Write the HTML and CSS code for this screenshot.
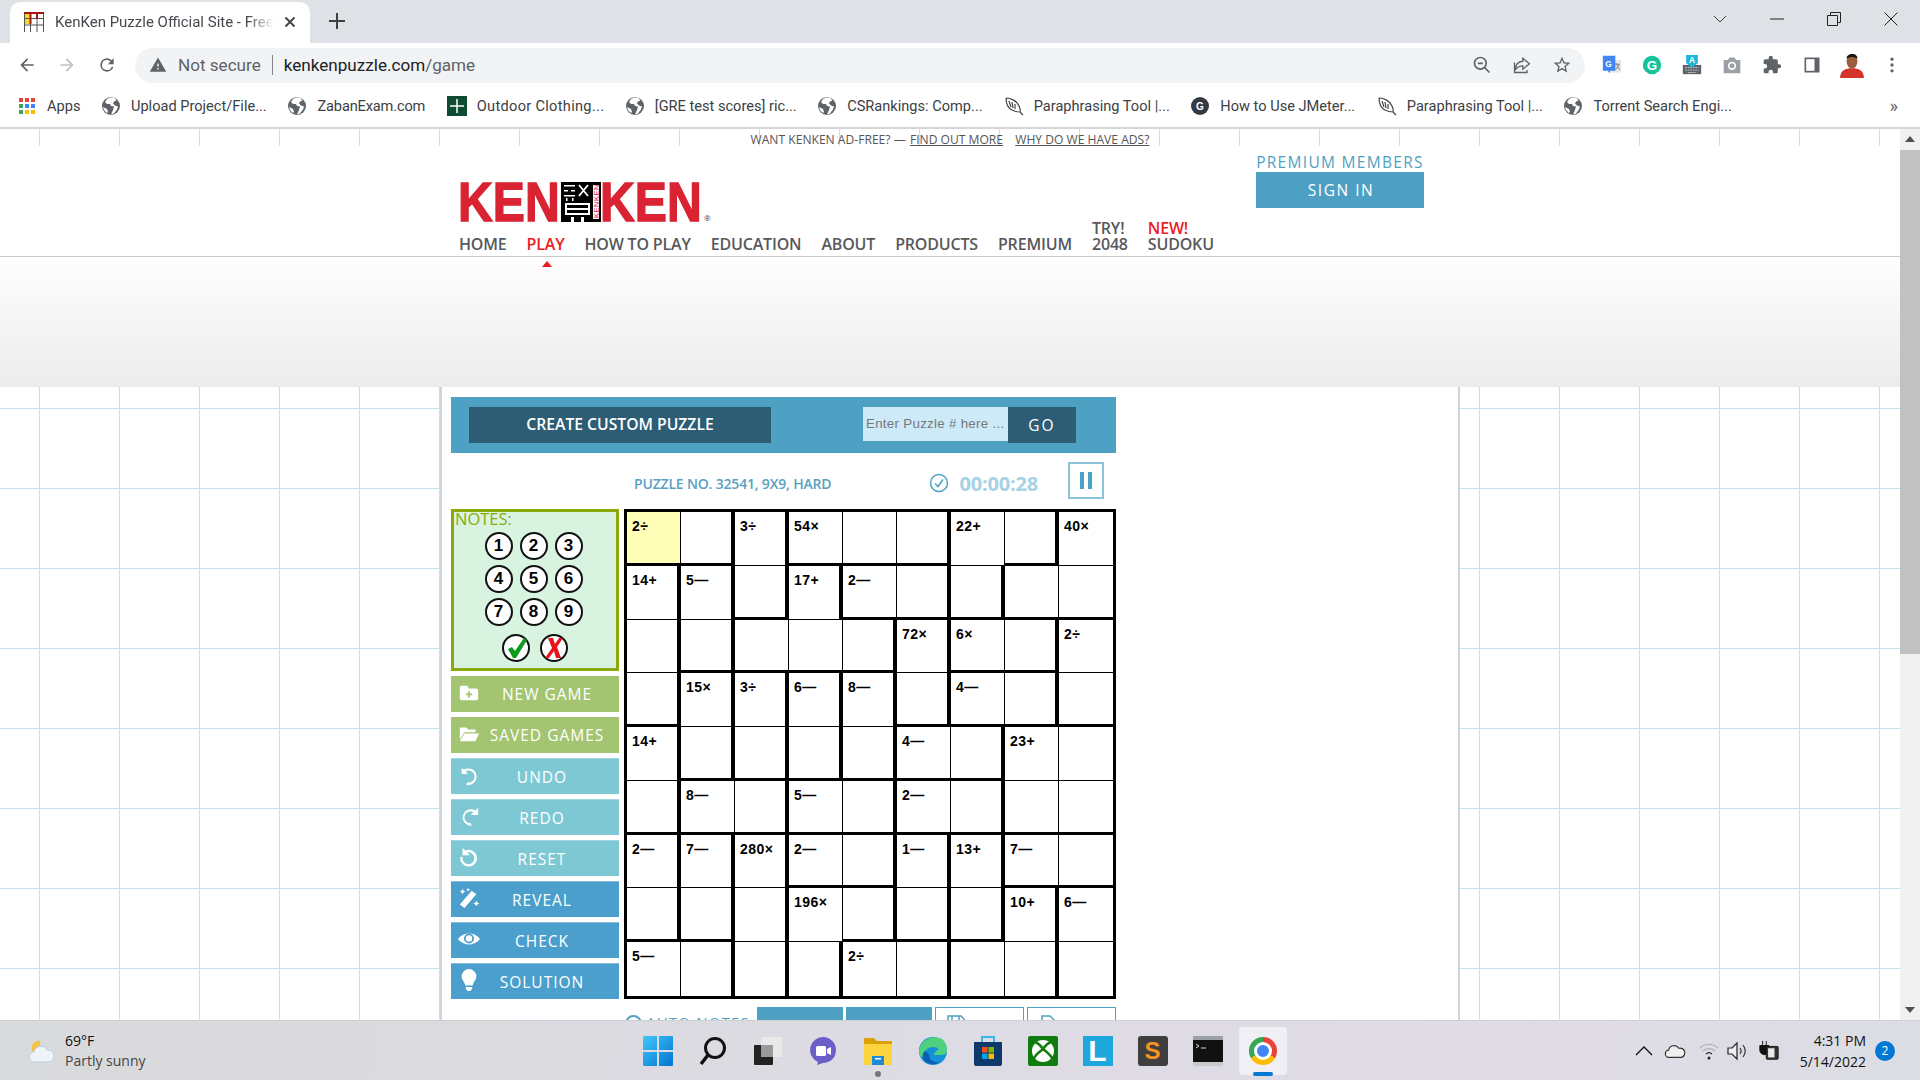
FILE: index.html
```html
<!DOCTYPE html>
<html lang="en">
<head>
    <meta charset="UTF-8">
    <title>KenKen Puzzle Official Site</title>
    <link rel="stylesheet" href="styles.css">
</head>
<body>
    <!-- shared icons -->
    <svg class="defs" width="0" height="0">
        <symbol id="globe" viewBox="0 0 20 20">
            <circle cx="10" cy="10" r="9" fill="#5f6368"/>
            <path d="M9 1.500 6 3 4 6l2 2h3l1 2 3 .5L12 14l-2 4.500 3-1 3-4 1-3-3-1-2-2 1-2 2.500-1L13 1.500zM2 11l4 2 1 3-1 1-3-3z" fill="#fff"/>
        </symbol>
        <symbol id="feather" viewBox="0 0 20 20">
            <path d="M2 2c5 0 11 3 13 8s1 6 1 6l3 3M2 2c0 5 2 10 6 12s8 2 8 2M5 5l2 6M8 6l1 6M11 8l0 5" fill="none" stroke="#444" stroke-width="1.200"/>
        </symbol>
    </svg>

    <div class="tabstrip">
        <div class="tab">
            <svg class="favicon" viewBox="0 0 20 20" width="20" height="20">
                <rect width="20" height="20" fill="#fff"/>
                <rect x="0" y="0" width="6" height="12" fill="#f2dc2b"/>
                <path d="M.5 0v20M6.500 0v20M13 0v20M19.500 0v20M0 6.500h20M0 13h20" stroke="#555" fill="none"/>
                <path d="M0 1h20M6.500 0v12M13 0v7" stroke="#a11" stroke-width="2" fill="none"/>
            </svg>
            <span class="tab-title">KenKen Puzzle Official Site - Free Online</span>
            <svg viewBox="0 0 12 12" width="12" height="12"><path d="M1.500 1.500l9 9M10.500 1.500l-9 9" stroke="#3c4043" stroke-width="1.800"/></svg>
        </div>
        <svg class="new-tab" viewBox="0 0 16 16" width="16" height="16"><path d="M8 0v16M0 8h16" stroke="#3c4043" stroke-width="2"/></svg>
        <div class="window-btns">
            <svg viewBox="0 0 14 8" width="14" height="8"><path d="M1 1l6 6 6-6" fill="none" stroke="#444"/></svg>
            <svg viewBox="0 0 14 14" width="14" height="14"><path d="M0 7h14" stroke="#222"/></svg>
            <svg viewBox="0 0 14 14" width="14" height="14"><path d="M.5 3.500h10v10H.5zM3.500 3.500v-3h10v10h-3" fill="none" stroke="#222"/></svg>
            <svg viewBox="0 0 14 14" width="14" height="14"><path d="M.5.500l13 13M13.500.500l-13 13" stroke="#222"/></svg>
        </div>
    </div>

    <div class="toolbar">
        <svg class="tool" viewBox="0 0 24 24"><path d="M20 11H7.800l5.600-5.600L12 4l-8 8 8 8 1.400-1.400L7.800 13H20z" fill="#5f6368"/></svg>
        <svg class="tool" viewBox="0 0 24 24"><path d="M4 11h12.200l-5.600-5.600L12 4l8 8-8 8-1.400-1.400 5.600-5.600H4z" fill="#bdc1c6"/></svg>
        <svg class="tool" viewBox="0 0 24 24"><path d="M17.650 6.350A7.960 7.960 0 0 0 12 4a8 8 0 1 0 7.730 10h-2.080A6 6 0 1 1 12 6c1.660 0 3.140.690 4.220 1.780L13 11h7V4z" fill="#5f6368"/></svg>
        <div class="omnibox">
            <svg class="warn" viewBox="0 0 24 24"><path d="M1 21h22L12 2 1 21zm12-3h-2v-2h2v2zm0-4h-2v-4h2v4z" fill="#5f6368"/></svg>
            <span class="not-secure">Not secure</span>
            <span class="omni-sep"></span>
            <span class="url">kenkenpuzzle.com<span class="url-path">/game</span></span>
            <span class="omni-icons">
                <svg class="tool" viewBox="0 0 24 24"><circle cx="10" cy="10" r="7" fill="none" stroke="#5f6368" stroke-width="2"/><path d="M15 15l6 6M7 10h6" stroke="#5f6368" stroke-width="2"/></svg>
                <svg class="tool" viewBox="0 0 24 24"><path d="M13 4l8 6.500-8 6.500v-4c-4 0-7 1-9 5 0-6 3-10 9-10.500zM3 9v12h15v-3" fill="none" stroke="#5f6368" stroke-width="1.600"/></svg>
                <svg class="tool" viewBox="0 0 24 24"><path d="M22 9.240l-7.190-.620L12 2 9.190 8.630 2 9.240l5.460 4.730L5.820 21 12 17.270 18.180 21l-1.630-7.030L22 9.240zM12 15.400l-3.760 2.270 1-4.280-3.320-2.880 4.380-.380L12 6.100l1.710 4.040 4.380.380-3.320 2.880 1 4.280L12 15.400z" fill="#5f6368"/></svg>
            </span>
        </div>
        <div class="extensions">
            <svg class="tool" viewBox="0 0 24 24"><rect x="10" y="6" width="13" height="15" fill="#e4e6e8"/><path d="M14 11h7M17 10l4 8M21 11l-5 7" stroke="#777" fill="none"/><path d="M1 1h15v18h-6l-1 3-2-3H1z" fill="#4285f4"/><text x="4" y="14" class="ext-g">G</text></svg>
            <svg class="tool" viewBox="0 0 24 24"><circle cx="12" cy="12" r="11" fill="#15c39a"/><text x="12" y="17.500" class="ext-gr">G</text></svg>
            <svg class="tool" viewBox="0 0 24 24"><rect x="1" y="12" width="22" height="11" fill="#5f6368"/><path d="M4 15h16M4 18h16M7 21h10" stroke="#ddd" stroke-dasharray="2 1"/><path d="M5 0h14v10l-7 5-7-5z" fill="#1eb6d8"/><text x="12" y="9.500" class="ext-a">A</text></svg>
            <svg class="tool" viewBox="0 0 24 24"><path d="M2 6h5l2-3h6l2 3h5v16H2z" fill="#9aa0a6"/><circle cx="12" cy="13" r="5" fill="#fff"/><circle cx="12" cy="13" r="3" fill="#9aa0a6"/></svg>
            <svg class="tool" viewBox="0 0 24 24"><path d="M20.500 11H19V7a2 2 0 0 0-2-2h-4V3.500a2.500 2.500 0 0 0-5 0V5H4a2 2 0 0 0-2 2v3.800h1.500a2.700 2.700 0 0 1 0 5.400H2V20a2 2 0 0 0 2 2h3.800v-1.500a2.700 2.700 0 0 1 5.400 0V22H17a2 2 0 0 0 2-2v-4h1.500a2.500 2.500 0 0 0 0-5z" fill="#5f6368"/></svg>
            <svg class="tool" viewBox="0 0 24 24"><path d="M3 3h18v18H3z" fill="#5f6368"/><rect x="5" y="5" width="10" height="14" fill="#fff"/></svg>
            <svg class="tool avatar" viewBox="0 0 24 24"><circle cx="12" cy="12" r="12" fill="#fff"/><path d="M1 24c0-7 5-9 11-9s11 2 11 9z" fill="#d5342b"/><ellipse cx="12" cy="8.500" rx="5" ry="7" fill="#9a5f3c"/><path d="M7 6c0-5 10-6 10 0-3-2-7-2-10 0z" fill="#1c1410"/></svg>
            <svg class="tool" viewBox="0 0 24 24"><circle cx="12" cy="5" r="2" fill="#5f6368"/><circle cx="12" cy="12" r="2" fill="#5f6368"/><circle cx="12" cy="19" r="2" fill="#5f6368"/></svg>
        </div>
    </div>

    <div class="bookmarks">
        <a class="bm">
            <svg class="bm-icon" viewBox="0 0 20 20"><g><rect x="2" y="2" width="4" height="4" fill="#ea4335"/><rect x="8" y="2" width="4" height="4" fill="#ea4335"/><rect x="14" y="2" width="4" height="4" fill="#ea4335"/><rect x="2" y="8" width="4" height="4" fill="#34a853"/><rect x="8" y="8" width="4" height="4" fill="#4285f4"/><rect x="14" y="8" width="4" height="4" fill="#4285f4"/><rect x="2" y="14" width="4" height="4" fill="#34a853"/><rect x="8" y="14" width="4" height="4" fill="#fbbc04"/><rect x="14" y="14" width="4" height="4" fill="#fbbc04"/></g></svg>
            Apps
        </a>
        <a class="bm long"><svg class="bm-icon"><use href="#globe"/></svg>Upload Project/File...</a>
        <a class="bm tight"><svg class="bm-icon"><use href="#globe"/></svg>ZabanExam.com</a>
        <a class="bm loose"><svg class="bm-icon" viewBox="0 0 20 20"><rect width="20" height="20" fill="#0f4a33"/><path d="M10 3v14M3 10h14" stroke="#fff" stroke-width="1.500"/></svg>Outdoor Clothing...</a>
        <a class="bm long"><svg class="bm-icon"><use href="#globe"/></svg>[GRE test scores] ric...</a>
        <a class="bm long"><svg class="bm-icon"><use href="#globe"/></svg>CSRankings: Comp...</a>
        <a class="bm long"><svg class="bm-icon"><use href="#feather"/></svg>Paraphrasing Tool |...</a>
        <a class="bm long"><svg class="bm-icon" viewBox="0 0 20 20"><circle cx="10" cy="10" r="9" fill="#333a44"/><text x="10" y="14" class="bm-g">G</text></svg>How to Use JMeter...</a>
        <a class="bm long"><svg class="bm-icon"><use href="#feather"/></svg>Paraphrasing Tool |...</a>
        <a class="bm long"><svg class="bm-icon"><use href="#globe"/></svg>Torrent Search Engi...</a>
        <span class="bm-more">»</span>
    </div>

    <div class="viewport">
        <div class="page">
            <div class="ad-line">
                WANT KENKEN AD-FREE? — <a>FIND OUT MORE</a> <a class="ad-why">WHY DO WE HAVE ADS?</a>
            </div>

            <header class="site-header">
                <div class="header-inner">
                    <div class="brand">
                        <div class="logo">
                            <span class="logo-word"><span>KEN</span></span>
                            <svg class="logo-mark" viewBox="0 0 40 40" width="40" height="40">
                                <rect width="40" height="40" fill="#000"/>
                                <path d="M3 3h11v1.500H3zM3 8h4v1.500H3zM10 8h4v1.500h-4zM3 13h11v1.500H3zM5 16h1.500v3H5zM11 16h1.500v3H11z" fill="#fff"/>
                                <path d="M18 3l9 11M27 3l-9 11" stroke="#fff" stroke-width="1.800"/>
                                <path d="M4 21h25v12H4zM6 23v3h21v-3zM6 28v3h21v-3z" fill="#fff" fill-rule="evenodd"/>
                                <path d="M10 35h3v5h-3zM20 35h3v5h-3z" fill="#fff"/>
                                <rect x="32" y="3" width="6" height="34" fill="#fff"/>
                                <text class="logo-small" transform="translate(37.500 36) rotate(-90)">KENKEN</text>
                            </svg>
                            <span class="logo-word"><span>KEN</span></span>
                            <span class="logo-reg">®</span>
                        </div>
                        <nav class="main-nav">
                            <a>HOME</a>
                            <a class="active">PLAY</a>
                            <a>HOW TO PLAY</a>
                            <a>EDUCATION</a>
                            <a>ABOUT</a>
                            <a>PRODUCTS</a>
                            <a>PREMIUM</a>
                            <a>TRY!<br>2048</a>
                            <a><span class="nav-new">NEW!</span><br>SUDOKU</a>
                        </nav>
                    </div>
                    <div class="premium">
                        <div class="premium-label">PREMIUM MEMBERS</div>
                        <a class="sign-in">SIGN IN</a>
                    </div>
                </div>
            </header>

            <div class="ad-band"></div>

            <main class="sheet">
                <div class="custom-bar">
                    <a class="create-btn">CREATE CUSTOM PUZZLE</a>
                    <div class="go-form">
                        <span class="puzzle-input">Enter Puzzle # here ...</span>
                        <a class="go-btn">GO</a>
                    </div>
                </div>

                <div class="status-row">
                    <span class="puzzle-name">PUZZLE NO. 32541, 9X9, HARD</span>
                    <svg class="timer-icon" viewBox="0 0 20 20" width="20" height="20"><circle cx="10" cy="10" r="8.500" fill="none" stroke="#4fa1c3" stroke-width="1.500"/><path d="M6 10.500l3 3 5-7" fill="none" stroke="#4fa1c3" stroke-width="1.500"/></svg>
                    <span class="timer">00:00:28</span>
                    <a class="pause-btn"><span></span><span></span></a>
                </div>

                <div class="game">
                    <div class="side">
                        <div class="notes">
                            <div class="notes-title">NOTES:</div>
                            <div class="note-grid">
                                <span class="note">1</span><span class="note">2</span><span class="note">3</span>
                                <span class="note">4</span><span class="note">5</span><span class="note">6</span>
                                <span class="note">7</span><span class="note">8</span><span class="note">9</span>
                            </div>
                            <div class="note-actions">
                                <span class="note"><svg viewBox="0 0 24 24" width="24" height="24"><path d="M4 13l4-2 3 4L20 2l3 2-11 18h-3z" fill="#0a9a1e"/></svg></span>
                                <span class="note"><svg viewBox="0 0 24 24" width="24" height="24"><path d="M6 2h5l2 6 4-6h4l-6 9 4 11h-5l-2-7-5 7H3l7-10z" fill="#e8141c"/></svg></span>
                            </div>
                        </div>

                        <a class="side-btn green wide"><svg viewBox="0 0 24 24"><path d="M2 6a2 2 0 0 1 2-2h6l2 3h8a2 2 0 0 1 2 2v9a2 2 0 0 1-2 2H4a2 2 0 0 1-2-2z" fill="#fff"/><path d="M12 10v7M8.500 13.500h7" stroke="#a3c571" stroke-width="2"/></svg><span>NEW GAME</span></a>
                        <a class="side-btn green wide"><svg viewBox="0 0 24 24"><path d="M2 5h7l2 2h8v3H7l-5 8zM7 11.500h16L19 20H2z" fill="#fff"/></svg><span>SAVED GAMES</span></a>
                        <a class="side-btn teal"><svg viewBox="0 0 24 24"><path d="M4 4v7h7L8.200 8.200A6.500 6.500 0 1 1 10 20l-1 2.500A9 9 0 1 0 6.300 6.300z" fill="#fff"/></svg><span>UNDO</span></a>
                        <a class="side-btn teal"><svg viewBox="0 0 24 24"><path d="M22 3v8h-8l3-3a6.500 6.500 0 1 0-3 12l1 2.500A9 9 0 1 1 19 6z" fill="#fff"/></svg><span>REDO</span></a>
                        <a class="side-btn teal"><svg viewBox="0 0 24 24"><path d="M5 2v8h8l-3-3a6.500 6.500 0 1 1-5 5H2.500A9.200 9.200 0 1 0 8 4.800z" fill="#fff"/></svg><span>RESET</span></a>
                        <a class="side-btn blue"><svg viewBox="0 0 24 24"><path d="M15 4l5 4L7 23l-5-4z" fill="#fff"/><path d="M5 2l1 2 2 1-2 1-1 2-1-2-2-1 2-1zM11 1l.7 1.300L13 3l-1.300.7L11 5l-.7-1.300L9 3l1.300-.7zM20 15l1 2 2 1-2 1-1 2-1-2-2-1 2-1z" fill="#fff"/></svg><span>REVEAL</span></a>
                        <a class="side-btn blue"><svg viewBox="0 0 24 24"><path d="M0 12c6-8 18-8 24 0-6 8-18 8-24 0z" fill="#fff"/><circle cx="12" cy="11.500" r="5.500" fill="#4a9fcc"/><circle cx="12" cy="11.500" r="3.500" fill="#fff"/></svg><span>CHECK</span></a>
                        <a class="side-btn blue"><svg viewBox="0 0 24 24"><path d="M12 0a8 8 0 0 1 8 8c0 4-3 6-4 10H8C7 14 4 12 4 8a8 8 0 0 1 8-8zM8.500 19.500h7v2l-2 2.500h-3l-2-2.500z" fill="#fff"/></svg><span>SOLUTION</span></a>
                    </div>

                    <div class="board">
                        <div class="cell b sel"><span>2÷</span></div><div class="cell r b"></div><div class="cell r"><span>3÷</span></div><div class="cell b"><span>54×</span></div><div class="cell b"></div><div class="cell r b"></div><div class="cell"><span>22+</span></div><div class="cell r b"></div><div class="cell"><span>40×</span></div>
                        <div class="cell r"><span>14+</span></div><div class="cell r"><span>5—</span></div><div class="cell r b"></div><div class="cell r"><span>17+</span></div><div class="cell b"><span>2—</span></div><div class="cell r b"></div><div class="cell r b"></div><div class="cell b"></div><div class="cell b"></div>
                        <div class="cell r"></div><div class="cell r b"></div><div class="cell b"></div><div class="cell b"></div><div class="cell r b"></div><div class="cell r"><span>72×</span></div><div class="cell b"><span>6×</span></div><div class="cell r b"></div><div class="cell"><span>2÷</span></div>
                        <div class="cell r b"></div><div class="cell r"><span>15×</span></div><div class="cell r"><span>3÷</span></div><div class="cell r"><span>6—</span></div><div class="cell r"><span>8—</span></div><div class="cell r b"></div><div class="cell b"><span>4—</span></div><div class="cell r b"></div><div class="cell b"></div>
                        <div class="cell r"><span>14+</span></div><div class="cell r b"></div><div class="cell r b"></div><div class="cell r b"></div><div class="cell r b"></div><div class="cell b"><span>4—</span></div><div class="cell r b"></div><div class="cell"><span>23+</span></div><div class="cell"></div>
                        <div class="cell r b"></div><div class="cell b"><span>8—</span></div><div class="cell r b"></div><div class="cell b"><span>5—</span></div><div class="cell r b"></div><div class="cell b"><span>2—</span></div><div class="cell r b"></div><div class="cell b"></div><div class="cell b"></div>
                        <div class="cell r"><span>2—</span></div><div class="cell r"><span>7—</span></div><div class="cell r"><span>280×</span></div><div class="cell b"><span>2—</span></div><div class="cell r b"></div><div class="cell r"><span>1—</span></div><div class="cell r"><span>13+</span></div><div class="cell b"><span>7—</span></div><div class="cell b"></div>
                        <div class="cell r b"></div><div class="cell r b"></div><div class="cell r"></div><div class="cell"><span>196×</span></div><div class="cell r b"></div><div class="cell r b"></div><div class="cell r b"></div><div class="cell r"><span>10+</span></div><div class="cell"><span>6—</span></div>
                        <div class="cell"><span>5—</span></div><div class="cell r"></div><div class="cell r"></div><div class="cell r"></div><div class="cell"><span>2÷</span></div><div class="cell r"></div><div class="cell"></div><div class="cell r"></div><div class="cell"></div>
                    </div>
                </div>

                <div class="board-tools">
                    <span class="auto-notes"><span class="auto-dot"></span>AUTO NOTES</span>
                    <a class="tool-btn solid"></a>
                    <a class="tool-btn solid"></a>
                    <a class="tool-btn"><svg viewBox="0 0 20 20" width="20" height="20"><path d="M2 2h13l3 3v13H2zM6 2v5h7V2" fill="none" stroke="#4fa1c3" stroke-width="1.500"/></svg>SAVE</a>
                    <a class="tool-btn"><svg viewBox="0 0 20 20" width="20" height="20"><path d="M4 2h8l4 4v12H4z" fill="none" stroke="#4fa1c3" stroke-width="1.500"/></svg>LOAD</a>
                </div>
            </main>
        </div>

        <div class="scrollbar">
            <span class="scroll-arrow up"></span>
            <div class="scroll-track"><div class="scroll-thumb"></div></div>
            <span class="scroll-arrow down"></span>
        </div>
    </div>

    <footer class="taskbar">
        <div class="weather">
            <svg viewBox="0 0 28 28" width="28" height="28"><path d="M6 16A7 7 0 0 1 12 4v10z" fill="#f5c242"/><path d="M7 25a5 5 0 0 1-1-10 7 7 0 0 1 13-2 6 6 0 0 1 2 12z" fill="#eef4fa" stroke="#bcd0e2"/></svg>
            <div class="weather-text">
                <div>69°F</div>
                <div class="weather-sub">Partly sunny</div>
            </div>
        </div>

        <div class="task-icons">
            <span class="task"><svg viewBox="0 0 30 30"><defs><linearGradient id="win" x1="0" y1="0" x2="1" y2="1"><stop offset="0" stop-color="#3fc8f8"/><stop offset="1" stop-color="#0473d0"/></linearGradient></defs><path d="M0 1a1 1 0 0 1 1-1h13v14H0zM16 0h13a1 1 0 0 1 1 1v13H16zM0 16h14v14H1a1 1 0 0 1-1-1zM16 16h14v13a1 1 0 0 1-1 1H16z" fill="url(#win)"/></svg></span>
            <span class="task"><svg viewBox="0 0 30 30"><circle cx="17" cy="12" r="9.500" fill="none" stroke="#111" stroke-width="3"/><path d="M10 19l-7 9" stroke="#111" stroke-width="3.500"/></svg></span>
            <span class="task"><svg viewBox="0 0 30 30"><rect x="1" y="9" width="19" height="20" rx="1" fill="#222"/><rect x="8" y="1" width="21" height="20" rx="1" fill="#e9e9ea"/><rect x="8" y="9" width="12" height="12" fill="#9a9a9a"/></svg></span>
            <span class="task"><svg viewBox="0 0 30 30"><path d="M15 1a13 13 0 0 1 13 13c0 8-6 13-13 13l-6 2 1-3A13 13 0 0 1 15 1z" fill="#6a5fc9"/><rect x="8" y="10" width="10" height="10" rx="1.500" fill="#fff"/><path d="M19 13l4-2v8l-4-2z" fill="#fff"/></svg></span>
            <span class="task running"><svg viewBox="0 0 30 30"><path d="M1 3a1 1 0 0 1 1-1h9l3 3h15v5H1z" fill="#dca109"/><path d="M1 8h28v20a1 1 0 0 1-1 1H2a1 1 0 0 1-1-1z" fill="#fbd33f"/><rect x="9" y="20" width="12" height="9" fill="#1e8bd6"/><rect x="12" y="22" width="6" height="1.500" fill="#fff"/></svg></span>
            <span class="task"><svg viewBox="0 0 30 30"><circle cx="15" cy="15" r="14" fill="#1490d8"/><path d="M1 15C2 5 12-1 22 2c5 2 7 7 7 13 0 3-3 4-7 4h-6c0-3 3-5 5-5-2-5-15-4-16 6-1 3-4-1-4-5z" fill="#4ed07e"/><path d="M11 19c0 5 5 8 11 7-4 3-11 3-15-1-3-3-3-8 0-10 1 1 4 2 4 4z" fill="#0a5fb0"/></svg></span>
            <span class="task"><svg viewBox="0 0 30 30"><path d="M9 6V1h12v5" fill="none" stroke="#3cb4e7" stroke-width="2"/><path d="M1 6h28v22a2 2 0 0 1-2 2H3a2 2 0 0 1-2-2z" fill="#0e3a6b"/><rect x="9" y="11" width="5.500" height="5.500" fill="#f25022"/><rect x="15.500" y="11" width="5.500" height="5.500" fill="#7fba00"/><rect x="9" y="17.500" width="5.500" height="5.500" fill="#00a4ef"/><rect x="15.500" y="17.500" width="5.500" height="5.500" fill="#ffb900"/></svg></span>
            <span class="task"><svg viewBox="0 0 30 30"><rect width="30" height="30" rx="2" fill="#107c10"/><circle cx="15" cy="15" r="11" fill="#fff"/><path d="M7 6c3 1 6 4 8 7 2-3 5-6 8-7M5 24c2-5 6-8 10-11 4 3 8 6 10 11" fill="none" stroke="#107c10" stroke-width="2.500"/></svg></span>
            <span class="task task-l">L</span>
            <span class="task task-s">S</span>
            <span class="task"><svg viewBox="0 0 30 30"><rect width="30" height="30" fill="#111"/><rect width="30" height="4" fill="#9aa0a6"/><rect y="26" width="30" height="4" fill="#c9c9c9"/><path d="M3 8l3 2-3 2M8 12h5" stroke="#ddd" fill="none"/></svg></span>
            <span class="task active"><span class="chrome"><span class="chrome-dot"></span></span></span>
        </div>

        <div class="tray">
            <svg viewBox="0 0 18 10" width="18" height="10"><path d="M1 9l8-8 8 8" fill="none" stroke="#111" stroke-width="1.300"/></svg>
            <svg class="tray-cloud" viewBox="0 0 24 18" width="22" height="18"><path d="M6 16a4 4 0 0 1-1-8 6 6 0 0 1 11-2 5 5 0 0 1 3 10z" fill="#efefef" stroke="#333" stroke-width="1.300"/></svg>
            <svg class="tray-wifi" viewBox="0 0 22 22" width="22" height="22"><path d="M2 8a13 13 0 0 1 18 0M5 11a9 9 0 0 1 12 0" fill="none" stroke="#b5b5b5" stroke-width="1.300"/><path d="M8 14a4.500 4.500 0 0 1 6 0" fill="none" stroke="#222" stroke-width="1.300"/><circle cx="11" cy="18" r="1.500" fill="#222"/></svg>
            <svg class="tray-sound" viewBox="0 0 22 22" width="22" height="22"><path d="M2 8h4l5-5v16l-5-5H2z" fill="#efefef" stroke="#222" stroke-width="1.200"/><path d="M14 8c1.500 2 1.500 4 0 6M17 5c3 4 3 8 0 12" fill="none" stroke="#333" stroke-width="1.200"/></svg>
            <svg class="tray-power" viewBox="0 0 24 24" width="22" height="22"><path d="M5 1v5M9 1v5M2 6h10v5a5 5 0 0 1-10 0z" fill="#111" stroke="#111"/><rect x="9" y="7" width="13" height="14" rx="1" fill="#333" stroke="#111"/><rect x="11" y="9" width="7" height="10" fill="#e9e9ea"/></svg>
            <div class="clock">
                <div>4:31 PM</div>
                <div>5/14/2022</div>
            </div>
            <span class="badge">2</span>
        </div>
    </footer>
</body>
</html>
```

FILE: styles.css
```css
html, body {
    height: 100%;
}

body {
    margin: 0;
    height: 100vh;
    display: flex;
    flex-direction: column;
    overflow: hidden;
    font-family: "Open Sans", sans-serif;
    background: #fff;
    color: #333;
}

.defs {
    position: absolute;
}

/* browser chrome */
.tabstrip {
    height: 43px;
    flex: none;
    background: #dee1e6;
    display: flex;
    align-items: flex-end;
    padding-left: 10px;
    box-sizing: border-box;
    font-family: Roboto, sans-serif;
}

.tab {
    width: 300px;
    height: 41px;
    box-sizing: border-box;
    background: #fff;
    border-radius: 10px 10px 0 0;
    display: flex;
    align-items: center;
    padding: 0 14px 2px 14px;
    gap: 10px;
}

.favicon {
    flex: none;
}

.tab-title {
    flex: 1;
    font-size: 15px;
    color: #45494e;
    white-space: nowrap;
    overflow: hidden;
    padding-left: 1px;
    -webkit-mask-image: linear-gradient(90deg, #000 88%, transparent);
    mask-image: linear-gradient(90deg, #000 88%, transparent);
}

.new-tab {
    margin: 0 0 14px 19px;
}

.window-btns {
    margin-left: auto;
    align-self: stretch;
    display: flex;
    align-items: center;
    gap: 43px;
    padding: 0 22px 6px 0;
}

.toolbar {
    height: 44px;
    flex: none;
    display: flex;
    align-items: center;
    padding-left: 17px;
    gap: 20px;
    box-sizing: border-box;
    font-family: Roboto, sans-serif;
}

.tool {
    width: 20px;
    height: 20px;
    flex: none;
}

.omnibox {
    width: 1450px;
    height: 35px;
    margin: 0 0 0 -2px;
    background: #f1f3f4;
    border-radius: 18px;
    display: flex;
    align-items: center;
    padding: 0 0 0 14px;
    box-sizing: border-box;
    font-size: 17.100px;
}

.warn {
    width: 18px;
    height: 18px;
    margin-right: 11px;
}

.not-secure {
    color: #5f6368;
}

.omni-sep {
    width: 1px;
    height: 20px;
    background: #80868b;
    margin: 0 11px;
}

.url {
    color: #202124;
}

.url-path {
    color: #5f6368;
}

.omni-icons {
    margin-left: auto;
    display: flex;
    gap: 20px;
    padding-right: 13px;
}

.extensions {
    display: flex;
    gap: 20px;
    margin-left: -3px;
}

.avatar {
    width: 26px;
    height: 26px;
    margin: -3px -3px;
}

.ext-g, .bm-g {
    font: bold 10px "Liberation Sans", sans-serif;
    fill: #fff;
}

.bm-g {
    text-anchor: middle;
}

.ext-gr {
    font: bold 16px "Liberation Sans", sans-serif;
    fill: #fff;
    text-anchor: middle;
}

.ext-a {
    font: bold 10px "Liberation Sans", sans-serif;
    fill: #fff;
    text-anchor: middle;
}

.bookmarks {
    height: 42px;
    flex: none;
    display: flex;
    align-items: center;
    padding: 0 0 3px 17px;
    gap: 20.500px;
    font-family: Roboto, sans-serif;
    font-size: 14.600px;
    color: #3c4043;
    border-bottom: 2px solid #d6d6d6;
    box-sizing: border-box;
    white-space: nowrap;
}

.bm {
    display: flex;
    align-items: center;
    gap: 10px;
}

/* chrome elides long bookmarks at one width */
.bm.long {
    min-width: 166px;
}

.bm.tight {
    letter-spacing: -.15px;
    margin-right: 1px;
}

.bm.loose {
    letter-spacing: .3px;
}

.bm-icon {
    width: 20px;
    height: 20px;
}

.bm-more {
    margin-left: auto;
    padding-right: 22px;
    font-size: 18px;
    color: #5f6368;
}

/* the page */
.viewport {
    flex: 1;
    min-height: 0;
    display: flex;
}

.page {
    flex: 1;
    min-width: 0;
    overflow: hidden;
    background-color: #fff;
    background-image:
        linear-gradient(#c5e3ec 1px, transparent 1px),
        linear-gradient(90deg, #c5e3ec 1px, transparent 1px);
    background-size: 80px 80px;
    background-position: 39px 39px;
}

.ad-line {
    height: 17px;
    line-height: 21px;
    text-align: center;
    font-size: 12.100px;
    color: #555;
    white-space: nowrap;
}

.ad-line a {
    text-decoration: underline;
    margin-left: 1px;
}

.ad-line .ad-why {
    margin-left: 9px;
}

.site-header {
    height: 111px;
    box-sizing: border-box;
    background: #fff;
    border-bottom: 1px solid #ccc;
}

.header-inner {
    width: 1020px;
    height: 100%;
    margin: 0 auto;
    padding: 0 36px 0 19px;
    box-sizing: border-box;
    display: flex;
    justify-content: space-between;
}

.brand {
    display: flex;
    flex-direction: column;
}

.logo {
    display: flex;
    align-items: flex-end;
    margin-top: 36px;
    height: 40px;
}

.logo-word {
    display: block;
    width: 102px;
    height: 40px;
    overflow: visible;
    line-height: 40px;
    font-family: "Liberation Sans", sans-serif;
    font-weight: bold;
    font-size: 56px;
    color: #d92232;
}

.logo-word span {
    display: block;
    width: 118px;
    margin-left: -1px;
    transform: scaleX(.86);
    transform-origin: left;
    -webkit-text-stroke: 1.400px #d92232;
}

.logo-reg {
    font-size: 8px;
    line-height: 8px;
    color: #444;
    margin-left: 1px;
}

.logo-mark {
    flex: none;
}

.logo-small {
    font: 7.500px "Liberation Sans", sans-serif;
    fill: #d92232;
    letter-spacing: .5px;
}

.main-nav {
    margin-top: -2px;
    display: flex;
    align-items: flex-end;
    gap: 20px;
    font-size: 16px;
    line-height: 16px;
    font-weight: 600;
    letter-spacing: -.18px;
    color: #58595b;
    white-space: nowrap;
}

.main-nav .active {
    color: #ed1c24;
    position: relative;
}

.main-nav .active::after {
    content: "";
    position: absolute;
    left: 15px;
    top: 25px;
    border: 5px solid transparent;
    border-top: 0;
    border-bottom: 6px solid #ed1c24;
}

.nav-new {
    color: #ed1c24;
}

.premium {
    padding-top: 7px;
    width: 168px;
    text-align: center;
}

.premium-label {
    font-size: 15.500px;
    line-height: 19px;
    letter-spacing: 1.300px;
    color: #4fa1c3;
    white-space: nowrap;
}

.sign-in {
    display: block;
    height: 36px;
    line-height: 36px;
    padding-left: 2px;
    background: #4d9fc3;
    color: #fff;
    font-size: 15.500px;
    letter-spacing: 1.500px;
}

.ad-band {
    height: 130px;
    background: linear-gradient(#fefefe, #ececec);
}

.sheet {
    width: 1020px;
    margin: 0 auto;
    box-sizing: border-box;
    background: #fff;
    border-left: 2px solid #d0d4d8;
    border-right: 2px solid #d0d4d8;
    padding: 10px 0 0 9px;
    min-height: 700px;
}

.custom-bar {
    width: 665px;
    height: 56px;
    box-sizing: border-box;
    background: #4fa1c3;
    padding: 10px 40px 0 18px;
    display: flex;
    justify-content: space-between;
}

.create-btn {
    width: 302px;
    height: 36px;
    line-height: 35px;
    text-align: center;
    background: #2c5d75;
    color: #fff;
    font-size: 15.700px;
    font-weight: 600;
}

.go-form {
    display: flex;
    align-items: flex-start;
}

.puzzle-input {
    width: 145px;
    height: 34px;
    line-height: 34px;
    box-sizing: border-box;
    padding-left: 3px;
    background: #cdeaf8;
    color: #777;
    font-family: "Liberation Sans", sans-serif;
    font-size: 13.300px;
    letter-spacing: .3px;
    white-space: nowrap;
}

.go-btn {
    width: 68px;
    height: 36px;
    line-height: 36px;
    text-align: center;
    background: #2c5d75;
    color: #fff;
    font-size: 15.500px;
    letter-spacing: 2px;
}

.status-row {
    width: 665px;
    height: 56px;
    display: flex;
    align-items: center;
}

.puzzle-name {
    margin: 4px 0 0 183px;
    font-size: 14px;
    font-weight: 600;
    letter-spacing: -.18px;
    color: #5a9fc0;
    white-space: nowrap;
}

.timer-icon {
    margin: 4px 0 0 auto;
}

.timer {
    margin: 4px 0 0 11px;
    font-size: 20px;
    font-weight: 700;
    letter-spacing: -.2px;
    color: #a6d2e4;
}

.pause-btn {
    margin: -2px 12px 0 30px;
    width: 36px;
    height: 37px;
    box-sizing: border-box;
    border: 2px solid #8cc3da;
    display: flex;
    align-items: center;
    justify-content: center;
    gap: 4px;
}

.pause-btn span {
    width: 4px;
    height: 17px;
    background: #4ba0c5;
}

.game {
    width: 665px;
    display: flex;
    gap: 5px;
}

.side {
    width: 168px;
    flex: none;
    display: flex;
    flex-direction: column;
    gap: 5px;
}

.notes {
    height: 162px;
    box-sizing: border-box;
    border: 3px solid #8aaa0a;
    background: #d8f4e0;
}

.notes-title {
    height: 20px;
    line-height: 14px;
    font-size: 16.500px;
    color: #8aaa0a;
    padding-left: 1px;
}

.note-grid {
    display: grid;
    grid-template-columns: repeat(3, 28px);
    gap: 5px 7px;
    justify-content: center;
    margin-right: 3px;
}

.note {
    width: 28px;
    height: 28px;
    box-sizing: border-box;
    border: 2px solid #111;
    border-radius: 50%;
    background: #fff;
    display: flex;
    align-items: center;
    justify-content: center;
    font: bold 17px "Liberation Sans", sans-serif;
    color: #000;
}

.note svg {
    flex: none;
}

.note-actions {
    margin-top: 8px;
    display: flex;
    justify-content: center;
    gap: 10px;
}

.side-btn {
    height: 36px;
    box-sizing: border-box;
    display: flex;
    align-items: center;
    padding: 0 17px 0 7px;
    color: #fff;
    font-size: 15.500px;
    letter-spacing: 1px;
    white-space: nowrap;
}

.side-btn svg {
    width: 22px;
    height: 22px;
    flex: none;
    margin-right: 2px;
    margin-top: -3px;
}

.side-btn span {
    flex: 1;
    text-align: center;
}

.side-btn.wide {
    padding-right: 7px;
}

.green {
    background: #a3c571;
}

.teal {
    background: #7ec8d4;
    border-top: 1px solid #9fd6df;
}

.blue {
    background: #4a9fcc;
    border-top: 1px solid #86bfdc;
}

.board {
    width: 492px;
    height: 490px;
    box-sizing: border-box;
    border: 3px solid #000;
    display: grid;
    grid-template-columns: repeat(9, 1fr);
    grid-template-rows: repeat(9, 1fr);
}

.cell {
    box-sizing: border-box;
    border-right: 1px solid #000;
    border-bottom: 1px solid #000;
    padding: 6px 0 0 5px;
    font: bold 14px/16px "Liberation Sans", sans-serif;
    letter-spacing: .5px;
    color: #000;
    white-space: nowrap;
    min-width: 0;
    min-height: 0;
}

.cell.r {
    border-right-width: 4px;
}

.cell.b {
    border-bottom-width: 3px;
}

.cell:nth-child(9n) {
    border-right: 0;
}

.cell:nth-last-child(-n+9) {
    border-bottom: 0;
}

.sel {
    background: #ffffb8;
}

.board-tools {
    width: 665px;
    margin-top: 8px;
    display: flex;
    align-items: flex-start;
    gap: 3px;
    justify-content: flex-end;
}

.auto-notes {
    margin-right: 4px;
    padding-top: 8px;
    display: flex;
    align-items: flex-start;
    gap: 4px;
    font-size: 15px;
    line-height: 15px;
    letter-spacing: 1.200px;
    color: #4fa1c3;
}

.auto-dot {
    width: 17px;
    height: 17px;
    box-sizing: border-box;
    border: 2px solid #4fa1c3;
    border-radius: 50%;
}

.tool-btn {
    width: 89px;
    height: 34px;
    box-sizing: border-box;
    border: 1px solid #4fa1c3;
    display: flex;
    align-items: center;
    gap: 8px;
    padding-left: 10px;
    font-size: 14px;
    color: #4fa1c3;
}

.tool-btn.solid {
    background: #4fa1c3;
    width: 86px;
}

.scrollbar {
    width: 20px;
    flex: none;
    background: #f1f1f1;
    display: flex;
    flex-direction: column;
}

.scroll-track {
    flex: 1;
    padding-top: 1px;
}

.scroll-thumb {
    height: 504px;
    background: #c1c1c1;
}

.scroll-arrow {
    height: 20px;
    flex: none;
    position: relative;
}

.scroll-arrow::after {
    content: "";
    position: absolute;
    left: 5px;
    top: 7px;
    border: 5px solid transparent;
}

.scroll-arrow.up::after {
    border-top: 0;
    border-bottom: 6px solid #505050;
}

.scroll-arrow.down::after {
    border-bottom: 0;
    border-top: 6px solid #505050;
}

/* windows taskbar */
.taskbar {
    height: 60px;
    flex: none;
    box-sizing: border-box;
    border-top: 1px solid #cfcfd2;
    background: linear-gradient(100deg, #d9dadc, #dcdbe2 40%, #e0dbe6 75%, #dcdde4);
    display: grid;
    grid-template-columns: 1fr auto 1fr;
    align-items: center;
    font-family: "Open Sans", sans-serif;
}

.weather {
    display: flex;
    align-items: center;
    padding-left: 28px;
    gap: 9px;
    font-size: 14px;
    line-height: 20px;
    color: #111;
}

.weather-sub {
    color: #444;
}

.task-icons {
    display: flex;
    gap: 25px;
}

.task {
    width: 30px;
    height: 30px;
    position: relative;
    display: flex;
    align-items: center;
    justify-content: center;
}

.task svg {
    width: 30px;
    height: 30px;
}

.task.running::after {
    content: "";
    position: absolute;
    left: 12px;
    bottom: -11px;
    width: 6px;
    height: 6px;
    border-radius: 50%;
    background: #777;
}

.task.active::before {
    content: "";
    position: absolute;
    left: -9px;
    top: -9px;
    width: 48px;
    height: 48px;
    border-radius: 4px;
    background: #f0eff4;
}

.task.active::after {
    content: "";
    position: absolute;
    left: 5px;
    bottom: -10px;
    width: 20px;
    height: 4px;
    border-radius: 2px;
    background: #0078d4;
}

.task-l {
    background: #1ea7dc;
    color: #fff;
    font: bold 30px/30px "Liberation Sans", sans-serif;
}

.task-s {
    background: #3f3f3f;
    border-radius: 3px;
    color: #f7931e;
    font: bold 24px/30px "Liberation Sans", sans-serif;
}

.chrome {
    position: relative;
    width: 28px;
    height: 28px;
    border-radius: 50%;
    background: conic-gradient(#ea4335 0 120deg, #fbbc04 120deg 240deg, #34a853 240deg);
    display: flex;
    align-items: center;
    justify-content: center;
}

.chrome-dot {
    width: 12px;
    height: 12px;
    border: 3px solid #fff;
    border-radius: 50%;
    background: #4285f4;
}

.tray {
    display: flex;
    align-items: center;
    justify-content: flex-end;
    padding-right: 25px;
}

.tray-cloud {
    margin-left: 11px;
}

.tray-wifi {
    margin-left: 12px;
}

.tray-sound {
    margin-left: 6px;
}

.tray-power {
    margin-left: 10px;
}

.clock {
    margin-left: 20px;
    text-align: right;
    font-size: 14px;
    line-height: 21px;
    color: #111;
}

.badge {
    width: 20px;
    height: 20px;
    border-radius: 50%;
    background: #0078d4;
    color: #fff;
    font-size: 12px;
    line-height: 20px;
    text-align: center;
    margin-left: 9px;
}
```
